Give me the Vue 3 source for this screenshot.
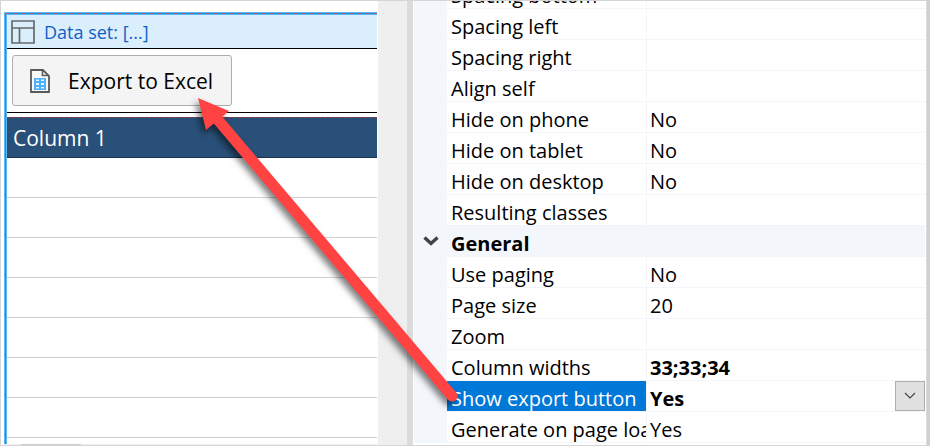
<script setup>
import { ref } from 'vue'

const exportChoice = ref('Yes')

const properties = [
  { name: 'Spacing bottom', value: '' },
  { name: 'Spacing left', value: '' },
  { name: 'Spacing right', value: '' },
  { name: 'Align self', value: '' },
  { name: 'Hide on phone', value: 'No' },
  { name: 'Hide on tablet', value: 'No' },
  { name: 'Hide on desktop', value: 'No' },
  { name: 'Resulting classes', value: '' },
  { name: 'General', group: true },
  { name: 'Use paging', value: 'No' },
  { name: 'Page size', value: '20' },
  { name: 'Zoom', value: '' },
  { name: 'Column widths', value: '33;33;34', changed: true },
  { name: 'Show export button', selected: true },
  { name: 'Generate on page load', value: 'Yes' }
]
</script>

<template>
  <main class="page">
    <section class="designer">
      <div class="dataset">
        <header class="dataset-head">
          <svg width="24" height="24" viewBox="0 0 24 24" aria-hidden="true">
            <path d="M1 1H23V23H1ZM1 8H23M8.500 8V23" fill="none" stroke="#66696c" stroke-width="1.700" />
          </svg>
          <span>Data set: [...]</span>
        </header>
        <div class="toolbar">
          <button type="button" class="export">
            <svg width="20" height="24" viewBox="0 0 20 24" aria-hidden="true">
              <path d="M1 1H13L19 7V23H1Z" fill="#fafafa" stroke="#5a5a5a" stroke-width="1.800" />
              <path d="M12.500 1V6.500H19" fill="none" stroke="#5a5a5a" stroke-width="1.600" />
              <path d="M4 9H16V21H4Z" fill="#4bb1fb" />
              <path d="M6 10.500H9V12H6ZM11 10.500H14V12H11ZM6 14H9V16H6ZM11 14H14V16H11ZM6 18H9V19.500H6ZM11 18H14V19.500H11Z" fill="#e8f5ff" />
            </svg>
            <span>Export to Excel</span>
          </button>
        </div>
        <table class="preview">
          <thead>
            <tr><th scope="col">Column 1</th></tr>
          </thead>
          <tbody>
            <tr v-for="n in 7" :key="n"><td></td></tr>
          </tbody>
        </table>
      </div>
      <div class="scroll"><div class="thumb"></div></div>
    </section>
    <div class="gutter"></div>
    <div class="splitter"></div>
    <section class="inspector">
      <table class="props">
        <colgroup>
          <col class="col-mark">
          <col class="col-name">
          <col>
        </colgroup>
        <tbody>
          <tr v-for="p in properties" :key="p.name" :class="{ group: p.group, selected: p.selected }">
            <td class="mark">
              <svg v-if="p.group" width="16" height="12" viewBox="0 0 16 12" aria-hidden="true">
                <path d="M1.500 1.500L8 7.500L14.500 1.500" fill="none" stroke="#404448" stroke-width="3.400" />
              </svg>
            </td>
            <th scope="row" class="name" :colspan="p.group ? 2 : 1">
              <label v-if="p.selected" for="show-export">{{ p.name }}</label>
              <template v-else>{{ p.name }}</template>
            </th>
            <td v-if="!p.group" class="value" :class="{ changed: p.changed }">
              <div v-if="p.selected" class="choice">
                <select id="show-export" v-model="exportChoice">
                  <option>Yes</option>
                  <option>No</option>
                </select>
                <span class="drop">
                  <svg width="12" height="8" viewBox="0 0 12 8" aria-hidden="true">
                    <path d="M1 1L6 6L11 1" fill="none" stroke="#444" stroke-width="1.200" />
                  </svg>
                </span>
              </div>
              <template v-else>{{ p.value }}</template>
            </td>
          </tr>
        </tbody>
      </table>
    </section>
    <div class="edge"></div>
    <svg class="arrow" width="480" height="430" viewBox="0 0 480 430" aria-hidden="true">
      <path d="M218 120L452 396" fill="none" stroke="#ff4343" stroke-width="11" stroke-linecap="round" />
      <path d="M198 98L229 111L206 130Z" fill="#ff4343" />
    </svg>
  </main>
</template>

<style>
body {
  margin: 0;
}
</style>

<style scoped>
.page {
  position: relative;
  box-sizing: border-box;
  display: grid;
  grid-template-columns: minmax(0, 377fr) 29px 6px minmax(0, 513fr) 4px;
  min-height: 100vh;
  border: 1px solid #d5d5d5;
  border-right: 0;
  background: #fff;
  color: #000;
  font-family: "Open Sans", "Noto Sans", sans-serif;
  font-size: 20px;
  line-height: 24px;
  overflow: hidden;
}

.designer {
  display: flex;
  flex-direction: column;
  padding: 11px 1px 0 3px;
}

.dataset {
  flex: 1;
  padding: 3px 0 0 3px;
  background:
    repeating-linear-gradient(90deg, #b0607a 0 4px, #0d8fe6 4px 8px) 1px 1px / 100% 1px no-repeat,
    repeating-linear-gradient(180deg, #b0607a 0 4px, #0d8fe6 4px 8px) 1px 1px / 1px 100% no-repeat,
    linear-gradient(#5db9f5, #5db9f5) 0 0 / 100% 3px no-repeat,
    linear-gradient(#5db9f5, #5db9f5) 0 0 / 3px 100% no-repeat;
}

.dataset-head {
  display: flex;
  align-items: center;
  gap: 9px;
  height: 33px;
  padding-left: 4px;
  border-bottom: 1px solid #000;
  background: #daeefc;
  color: #1260c4;
  font-size: 18px;
}

.toolbar {
  padding: 6px 5px;
  border-bottom: 1px solid #000;
}

.export {
  display: flex;
  align-items: center;
  gap: 18px;
  height: 51px;
  padding: 0 18px 0 17px;
  border: 1px solid #adadad;
  border-radius: 3px;
  background: #f4f4f4;
  color: #000;
  font: inherit;
  font-size: 21px;
  white-space: nowrap;
}

.preview {
  width: 100%;
  margin-top: 4px;
  border-spacing: 0;
}

.preview th {
  height: 39px;
  padding: 0 6px;
  border-top: 1px dashed #9a3b40;
  border-bottom: 1px solid #17334f;
  background: #295078;
  color: #fff;
  font-size: 21px;
  font-weight: 400;
  text-align: left;
}

.preview td {
  height: 39px;
  padding: 0;
  border-bottom: 1px solid #d0d0d0;
}

.scroll {
  padding-left: 17px;
  background: #f0f0f0;
}

.thumb {
  width: 60px;
  height: 1px;
  background: #cdcdcd;
}

.gutter {
  background: #efefef;
}

.splitter {
  background: #dadbdb;
}

.inspector {
  padding: 0 1px;
  overflow: hidden;
}

.props {
  width: 100%;
  margin-top: -23px;
  table-layout: fixed;
  border-spacing: 0;
}

.col-mark {
  width: 33px;
}

.col-name {
  width: 199px;
}

.props td,
.props th {
  height: 24px;
  padding: 6px 0 0;
  border-bottom: 1px solid #f3f5fa;
  font-weight: 400;
  text-align: left;
  white-space: nowrap;
  overflow: hidden;
}

.props .mark {
  padding: 0;
  border-bottom-color: #f3f7fc;
  background: #f3f7fc;
  text-align: center;
  line-height: 12px;
}

.props .name {
  padding-left: 4px;
}

.props .value {
  padding-left: 3px;
  border-left: 1px solid #f3f5fa;
}

.props .changed {
  font-weight: 700;
}

.group th {
  background: #f3f7fc;
}

.props .group .name {
  font-weight: 700;
}

.selected .name {
  background: #0078d7;
  background-clip: padding-box;
  color: #fff;
}

.props .selected .value {
  padding-top: 0;
}

.choice {
  display: flex;
  height: 30px;
}

.choice select {
  flex: 1;
  padding: 6px 0 0;
  border: 0;
  appearance: none;
  background: transparent;
  color: #000;
  font: inherit;
  font-weight: 700;
}

.drop {
  display: flex;
  align-items: center;
  justify-content: center;
  box-sizing: border-box;
  width: 30px;
  border: 1px solid #adadad;
  background: #e1e1e1;
}

.edge {
  background: #cfd0d5;
  border-left: 1px solid #dcdcdf;
}

.arrow {
  position: absolute;
  top: -1px;
  left: -1px;
  pointer-events: none;
  filter: drop-shadow(-3px 4px 3px rgba(0, 0, 0, 0.5));
}
</style>
